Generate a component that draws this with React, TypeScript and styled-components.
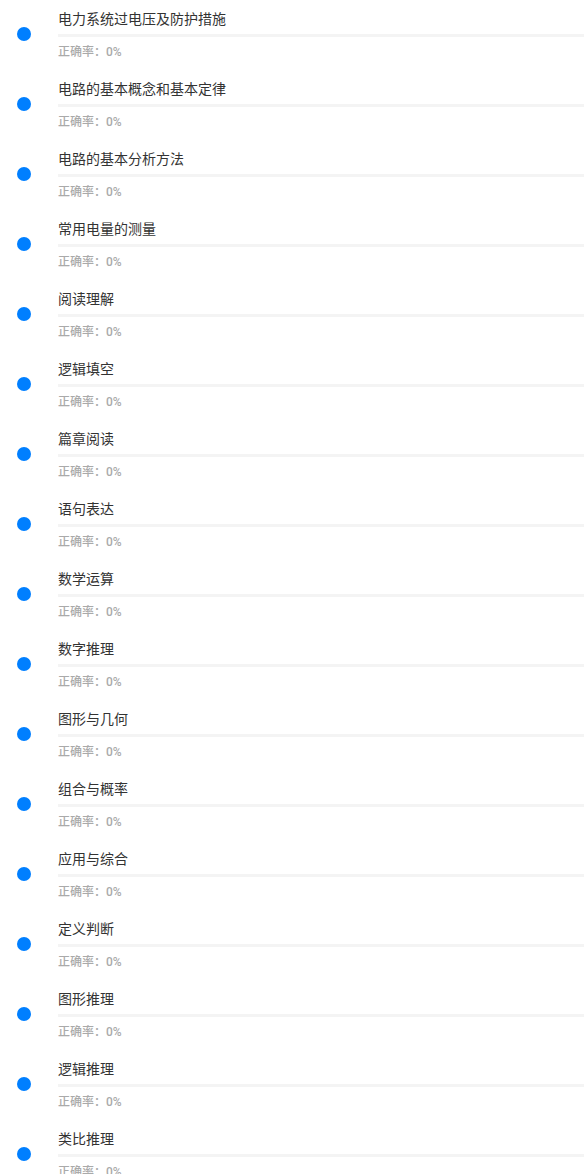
import React from "react";
import styled, { createGlobalStyle } from "styled-components";

const Global = createGlobalStyle`
  html, body { margin: 0; padding: 0; background: #fff; }
  body { font-family: Roboto, "Noto Sans CJK SC", sans-serif; }
`;

const List = styled.div`
  display: flex;
  flex-direction: column;
  width: 584px;
  overflow: hidden;
  height: 1174px;
`;

const Row = styled.div`
  display: flex;
  height: 70px;
  flex-shrink: 0;
`;

const DotCol = styled.div`
  width: 58px;
  flex-shrink: 0;
  padding-left: 17px;
  padding-top: 27px;
  box-sizing: border-box;
`;

const Dot = styled.div`
  width: 14px;
  height: 14px;
  border-radius: 50%;
  background: #007fff;
`;

const Content = styled.div`
  flex: 1;
  display: flex;
  flex-direction: column;
  padding-top: 9px;
`;

const Title = styled.div`
  font-size: 14px;
  line-height: 20px;
  color: #333;
`;

const Bar = styled.div`
  height: 3px;
  margin-top: 5px;
  background: #f4f4f4;
`;

const Rate = styled.div`
  margin-top: 7px;
  font-size: 12px;
  line-height: 16px;
  color: #aaa;
  font-weight: 500;
`;

const items = [
  "电力系统过电压及防护措施",
  "电路的基本概念和基本定律",
  "电路的基本分析方法",
  "常用电量的测量",
  "阅读理解",
  "逻辑填空",
  "篇章阅读",
  "语句表达",
  "数学运算",
  "数字推理",
  "图形与几何",
  "组合与概率",
  "应用与综合",
  "定义判断",
  "图形推理",
  "逻辑推理",
  "类比推理",
];

export default function App() {
  return (
    <>
      <Global />
      <List>
        {items.map((t) => (
          <Row key={t}>
            <DotCol>
              <Dot />
            </DotCol>
            <Content>
              <Title>{t}</Title>
              <Bar />
              <Rate>正确率：0%</Rate>
            </Content>
          </Row>
        ))}
      </List>
    </>
  );
}
